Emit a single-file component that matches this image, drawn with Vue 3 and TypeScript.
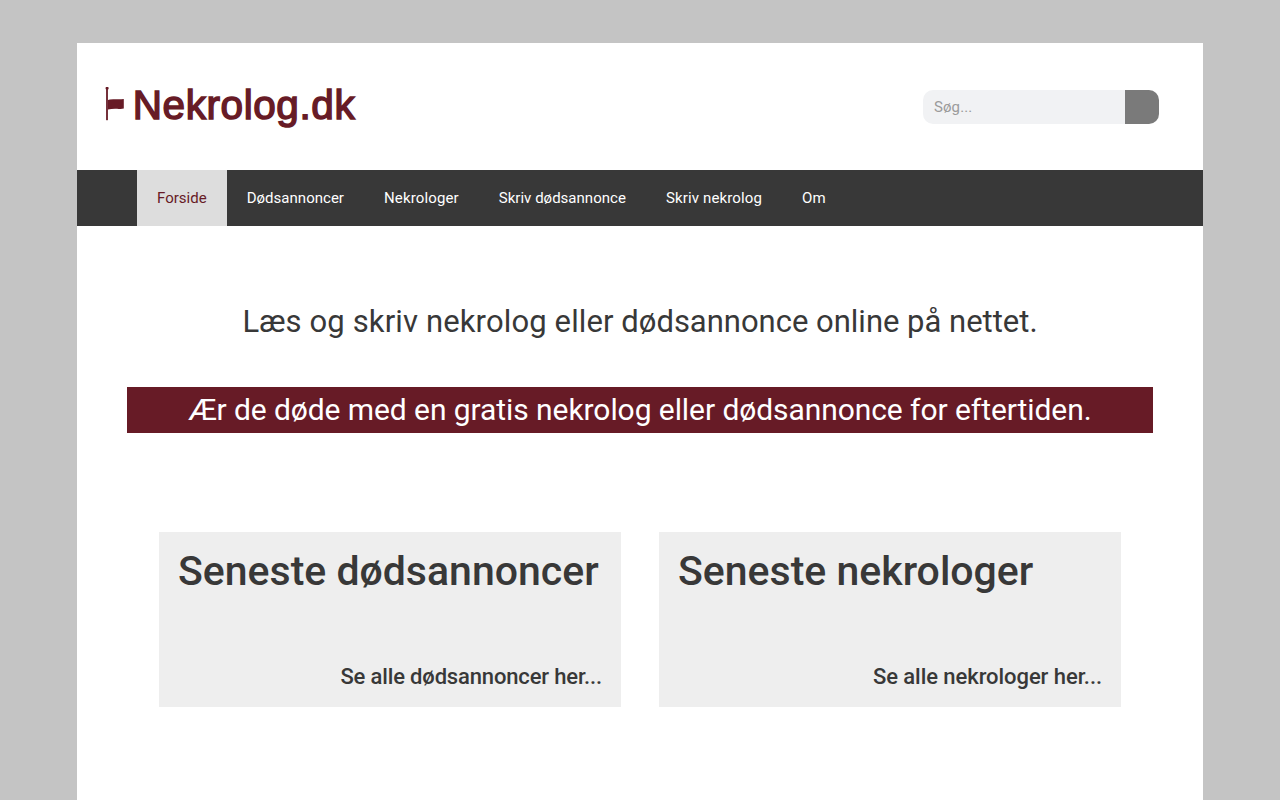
<!-- App.vue -->
<script setup lang="ts">
import { ref } from 'vue'

interface NavItem {
    label: string
    value: string
    wide?: boolean
}

interface Section {
    title: string
    linkText: string
    tight?: boolean
}

const navItems: NavItem[] = [
    { label: 'Forside', value: 'forside' },
    { label: 'Dødsannoncer', value: 'doedsannoncer' },
    { label: 'Nekrologer', value: 'nekrologer', wide: true },
    { label: 'Skriv dødsannonce', value: 'skriv-doedsannonce' },
    { label: 'Skriv nekrolog', value: 'skriv-nekrolog', wide: true },
    { label: 'Om', value: 'om' }
]

const sections: Section[] = [
    { title: 'Seneste dødsannoncer', linkText: 'Se alle dødsannoncer her...', tight: true },
    { title: 'Seneste nekrologer', linkText: 'Se alle nekrologer her...' }
]

const activeItem = ref('forside')
const query = ref('')
</script>

<template>
    <div class="page">
        <header class="header">
            <a class="logo" href="#" aria-label="Nekrolog.dk">
                <svg width="270" height="63" viewBox="0 0 270 63">
                    <!-- flag on half mast -->
                    <rect x="1.1" y="12" width="1.8" height="33.2" fill="#671b26" />
                    <rect x="0.6" y="12" width="3" height="2.6" rx="0.8" fill="#671b26" />
                    <path d="M3 25 Q4.5 24 10 24.2 Q15 24.4 18.8 24 V33.6 Q16 34.4 12 33.7 Q7 33.4 3 34.6 Z" fill="#671b26" />
                    <text class="logo-text" x="27.7" y="44" textLength="222">Nekrolog.dk</text>
                </svg>
            </a>
            <form class="search" @submit.prevent>
                <input v-model="query" class="search-input" type="search" placeholder="Søg..." />
                <button class="search-button" type="submit" aria-label="Søg"></button>
            </form>
        </header>

        <nav class="nav">
            <a v-for="item in navItems" :key="item.value" href="#" class="nav-item"
                :class="{ active: activeItem === item.value, wide: item.wide }"
                @click.prevent="activeItem = item.value">
                {{ item.label }}
            </a>
        </nav>

        <main class="content">
            <h2 class="intro"><span class="lead">Læs og skriv nekrolog eller</span> dødsannonce online på nettet.</h2>
            <h2 class="banner">Ær de døde med en gratis nekrolog eller dødsannonce for eftertiden.</h2>

            <div class="sections">
                <section v-for="section in sections" :key="section.title" class="section">
                    <h2 class="section-title">{{ section.title }}</h2>
                    <a class="section-link" :class="{ tight: section.tight }" href="#">{{ section.linkText }}</a>
                </section>
            </div>
        </main>
    </div>
</template>

<style>
body {
    background: #c4c4c4;
    overflow: hidden;
}
</style>

<style scoped>
.page {
    box-sizing: border-box;
    width: 1126px;
    min-height: 757px;
    margin: 43px auto 0;
    background: #ffffff;
    color: #383838;
    font-family: Roboto, "Liberation Sans", sans-serif;
}

.header {
    box-sizing: border-box;
    display: flex;
    align-items: center;
    justify-content: space-between;
    height: 127px;
    padding: 0 44px 0 28px;
}

.logo,
.logo svg {
    display: block;
}

.logo-text {
    font-family: "Liberation Sans", Arial, sans-serif;
    font-size: 40.5px;
    fill: #671b26;
    stroke: #671b26;
    stroke-width: 1.5;
}

.search {
    display: flex;
    width: 236px;
    height: 34px;
    border-radius: 10px;
    overflow: hidden;
}

.search-input {
    flex: 1;
    min-width: 0;
    padding: 0 11px;
    border: none;
    outline: none;
    background: #f1f2f4;
    color: #383838;
    font-family: inherit;
    font-size: 15px;
    letter-spacing: 0.1px;
    appearance: none;
}

.search-input::placeholder {
    color: #9b9b9b;
}

.search-button {
    width: 34px;
    padding: 0;
    border: none;
    background: #7a7a7a;
    cursor: pointer;
}

.nav {
    display: flex;
    height: 56px;
    padding-left: 60px;
    background: #383838;
}

.nav-item {
    padding: 0 20px;
    color: #ffffff;
    font-size: 15px;
    line-height: 56px;
    letter-spacing: 0.02px;
    text-decoration: none;
}

.nav-item.wide {
    letter-spacing: 0.14px;
}

.nav-item.active {
    background: #dddddd;
    color: #671b26;
}

.content {
    padding: 73px 50px 0;
}

.intro,
.banner {
    margin: 0;
    font-weight: 400;
    line-height: 46px;
    text-align: center;
    white-space: nowrap;
}

.intro {
    font-size: 31px;
    letter-spacing: -0.01px;
}

.lead {
    letter-spacing: 0.13px;
}

.banner {
    margin-top: 42px;
    background: #671b26;
    color: #ffffff;
    font-size: 30px;
    letter-spacing: -0.07px;
}

.sections {
    display: grid;
    grid-template-columns: 1fr 1fr;
    gap: 38px;
    padding: 99px 32px 0;
}

.section {
    box-sizing: border-box;
    display: flex;
    flex-direction: column;
    justify-content: space-between;
    height: 175px;
    padding: 19px;
    background: #eeeeee;
}

.section-title {
    margin: 0;
    font-size: 41px;
    font-weight: 500;
    line-height: 41px;
    white-space: nowrap;
}

.section-link {
    align-self: flex-end;
    color: #383838;
    font-size: 22px;
    font-weight: 500;
    line-height: 22px;
    letter-spacing: -0.06px;
    text-decoration: none;
}

.section-link.tight {
    letter-spacing: -0.15px;
}
</style>
